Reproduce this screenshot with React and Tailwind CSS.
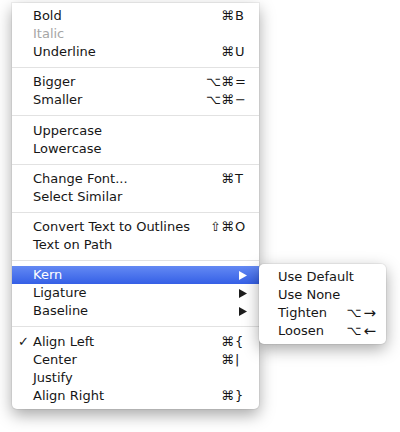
import React from "react";

const groups = [
  [
    { label: "Bold", mods: "⌘", key: "B" },
    { label: "Italic", disabled: true },
    { label: "Underline", mods: "⌘", key: "U" },
  ],
  [
    { label: "Bigger", mods: "⌥⌘", key: "=" },
    { label: "Smaller", mods: "⌥⌘", key: "−" },
  ],
  [{ label: "Uppercase" }, { label: "Lowercase" }],
  [
    { label: "Change Font...", mods: "⌘", key: "T" },
    { label: "Select Similar" },
  ],
  [
    { label: "Convert Text to Outlines", mods: "⇧⌘", key: "O" },
    { label: "Text on Path" },
  ],
  [
    { label: "Kern", submenu: true, active: true },
    { label: "Ligature", submenu: true },
    { label: "Baseline", submenu: true },
  ],
  [
    { label: "Align Left", checked: true, mods: "⌘", key: "{" },
    { label: "Center", mods: "⌘", key: "|" },
    { label: "Justify" },
    { label: "Align Right", mods: "⌘", key: "}" },
  ],
];

// separator heights before each group (index 1..6)
const sepClass = ["", "h-[12px]", "h-[13px]", "h-[12px]", "h-[12px]", "h-[12px]", "h-[13px]"];

const kernItems = [
  { label: "Use Default" },
  { label: "Use None" },
  { label: "Tighten", mods: "⌥", key: "→" },
  { label: "Loosen", mods: "⌥", key: "←" },
];

function Shortcut({ mods, keyChar }) {
  return (
    <div className="flex items-center">
      <span className="text-right">{mods}</span>
      <span className="w-[13px] pl-[1px] text-left">{keyChar}</span>
    </div>
  );
}

function Arrow({ white }) {
  return (
    <svg width="8" height="9" viewBox="0 0 8 9">
      <path d="M0 0 L8 4.5 L0 9 Z" fill={white ? "#ffffff" : "#1c1c1c"} />
    </svg>
  );
}

function KernMenu() {
  return (
    <div className="absolute left-full top-[-2px] w-[127px] rounded-[5px] bg-white py-[4px] shadow-[0_5px_16px_rgba(0,0,0,0.35)] ring-1 ring-black/5">
      {kernItems.map((it) => (
        <div
          key={it.label}
          className="flex h-[18px] items-center justify-between pl-[19px] pr-[10px] text-[#161616]"
        >
          <span>{it.label}</span>
          {it.key && (
            <div className="flex items-center">
              <span>{it.mods}</span>
              <span className="ml-[2px] text-[15px] leading-none">{it.key}</span>
            </div>
          )}
        </div>
      ))}
    </div>
  );
}

function Row({ it }) {
  const textColor = it.active
    ? "text-white"
    : it.disabled
    ? "text-[#a6a6a6]"
    : "text-[#161616]";
  return (
    <div
      className={
        "relative flex h-[18px] items-center pl-[21px] pr-[12px] " +
        textColor +
        (it.active ? " bg-gradient-to-b from-[#6489f3] to-[#355fe6]" : "")
      }
    >
      {it.checked && (
        <span className="absolute left-[6px] top-0 leading-[18px]">✓</span>
      )}
      <span className="flex-1">{it.label}</span>
      {it.key && <Shortcut mods={it.mods} keyChar={it.key} />}
      {it.submenu && <Arrow white={it.active} />}
      {it.active && <KernMenu />}
    </div>
  );
}

export default function App() {
  return (
    <div
      className="h-[432px] w-[400px] bg-white pt-[3px] pl-[12px] text-[13px]"
      style={{ fontFamily: '"DejaVu Sans", "Liberation Sans", sans-serif' }}
    >
      <div className="w-[247px] rounded-b-[5px] bg-white pt-[4px] pb-[4px] shadow-[0_6px_16px_rgba(0,0,0,0.35)] ring-1 ring-black/5">
        {groups.map((g, gi) => (
          <div key={gi}>
            {gi > 0 && (
              <div className={"flex items-center " + sepClass[gi]}>
                <div className="h-px w-full bg-[#e2e2e2]" />
              </div>
            )}
            {g.map((it) => (
              <Row key={it.label} it={it} />
            ))}
          </div>
        ))}
      </div>
    </div>
  );
}
